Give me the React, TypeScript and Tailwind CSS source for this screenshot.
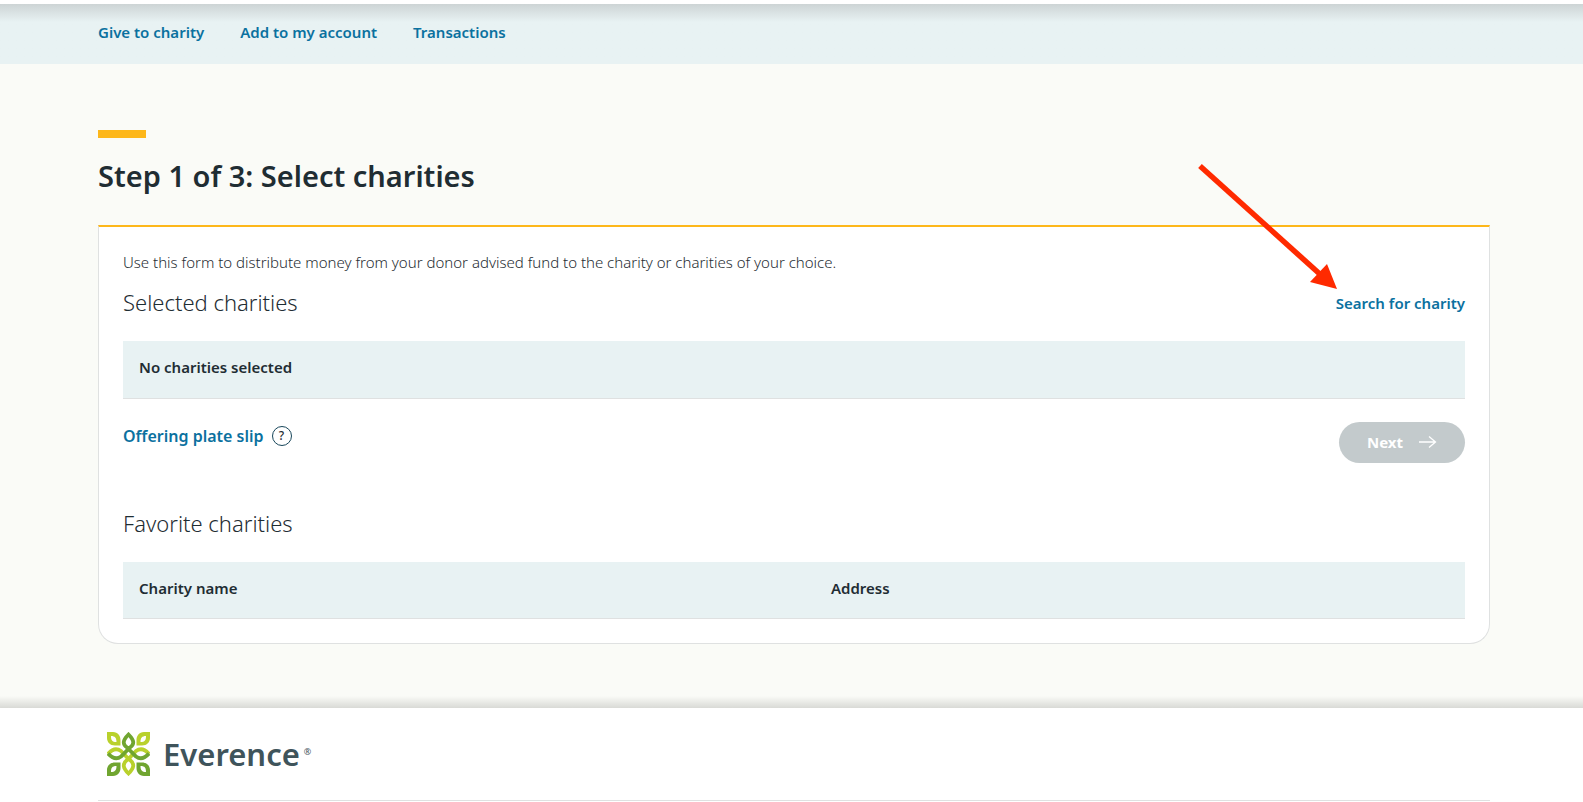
import React from 'react';
import clsx from 'clsx';

const navLinks = ['Give to charity', 'Add to my account', 'Transactions'];

// Corner leaf of the logo, drawn for the top left and mirrored for the others
const leaf =
  'M0 0H6C11 0 13.500 4 13.500 8V13.500H8C3 13.500 0 10 0 6ZM4 4C4 8 5 10 9.500 10C9.500 6 8 4 4 4Z';

function LogoMark() {
  return (
    <svg viewBox="0 0 43 44" className="h-11 w-[43px]" aria-hidden="true">
      <g fillRule="evenodd">
        <path d={leaf} fill="#b9d12c" />
        <path d={leaf} fill="#b9d12c" transform="matrix(-1 0 0 1 43 0)" />
        <path d={leaf} fill="#70a530" transform="matrix(1 0 0 -1 0 44)" />
        <path d={leaf} fill="#70a530" transform="matrix(-1 0 0 -1 43 44)" />
      </g>
      <g fill="none" strokeWidth="3.800">
        <path
          d="M1 22C6 16 10 16 14 19C18 23 20 26 23 28C28 32 27 36 21.500 41.500C16 36 15 32 20 28C23 26 25 23 29 19C33 16 37 16 42 22"
          stroke="#b9d12c"
        />
        <path
          d="M1 21.500C6 27 10 27.500 14 24.500C18 21 20 18 23 15.500C28 12 27 8 21.500 2.500C16 8 15 12 20 15.500C23 18 25 21 29 24.500C33 27.500 37 27 42 21.500"
          stroke="#70a530"
        />
      </g>
    </svg>
  );
}

function PointerArrow() {
  return (
    <svg
      viewBox="0 0 140 128"
      className="pointer-events-none absolute right-[127px] bottom-full h-32 w-[140px]"
      aria-hidden="true"
    >
      <path d="M2 4L124 114" stroke="#ff2a00" strokeWidth="5.500" />
      <path d="M139 127L129 102L112 120Z" fill="#ff2a00" />
    </svg>
  );
}

function CharityTable({ label, columns }: { label: string; columns: string[] }) {
  return (
    <table aria-label={label} className="w-full table-fixed text-left">
      <thead>
        <tr className="border-b border-[#dfe1e1] bg-[#e8f2f3]">
          {columns.map((column, i) => (
            <th
              key={column}
              scope="col"
              className={clsx('h-[57px] px-4 pb-1 text-[15px] font-semibold', columns.length > 1 && i === 0 && 'w-[692px]')}
            >
              {column}
            </th>
          ))}
        </tr>
      </thead>
    </table>
  );
}

export default function App() {
  return (
    <div className="flex min-h-screen flex-col bg-[#fafbf7] font-['Noto_Sans','Open_Sans',sans-serif] text-[#1f2d33]">
      <nav className="border-t-4 border-white bg-[#e8f2f3]">
        <div className="bg-linear-to-b from-[#cdd4d5] to-[#e8f2f3] to-[18px] pr-[93px] pl-[98px]">
          <ul className="flex h-[60px] gap-9 pt-4 text-[15px] leading-6 font-semibold text-[#0b719f]">
            {navLinks.map((link) => (
              <li key={link}>
                <a href="#">{link}</a>
              </li>
            ))}
          </ul>
        </div>
      </nav>

      <main className="pt-[66px] pr-[93px] pb-[52px] pl-[98px]">
        <div className="h-2 w-12 bg-[#fdb71a]" />
        <h1 className="mt-5 text-[29px] leading-9 font-semibold">Step 1 of 3: Select charities</h1>

        <section className="mt-[31px] rounded-b-[20px] border border-t-2 border-[#dfe1e1] border-t-[#fdb71a] bg-white px-6 pb-6">
          <p className="pt-[23px] text-[15px] leading-6 font-light">
            Use this form to distribute money from your donor advised fund to the charity or charities of your choice.
          </p>

          <div className="mt-3 flex items-center justify-between">
            <h2 className="text-[22px] leading-8 font-light">Selected charities</h2>
            <div className="relative pt-px">
              <a href="#" className="block text-[15px] leading-6 font-semibold text-[#0b719f]">
                Search for charity
              </a>
              <PointerArrow />
            </div>
          </div>

          <div className="mt-[23px]">
            <CharityTable label="Selected charities" columns={['No charities selected']} />
          </div>

          <div className="mt-[23px] flex items-start justify-between">
            <div className="flex items-center gap-2 pt-[2px]">
              <a href="#" className="text-base leading-6 font-semibold text-[#0b719f]">
                Offering plate slip
              </a>
              <button
                type="button"
                aria-label="About offering plate slips"
                className="flex size-5 items-center justify-center rounded-full border border-[#17465a] text-xs font-medium"
              >
                ?
              </button>
            </div>
            <button
              type="button"
              disabled
              className="flex h-[41px] items-center gap-4 rounded-full bg-[#c3cacc] px-7 text-[15px] font-bold text-white"
            >
              Next
              <svg viewBox="0 0 18 12" className="h-3 w-[18px]" fill="none" stroke="currentColor" aria-hidden="true">
                <path d="M0 6H16.500M10 0.500L16.500 6L10 11.500" strokeWidth="1.300" />
              </svg>
            </button>
          </div>

          <h2 className="mt-11 text-[22px] leading-8 font-light">Favorite charities</h2>
          <div className="mt-[23px]">
            <CharityTable label="Favorite charities" columns={['Charity name', 'Address']} />
          </div>
        </section>
      </main>

      <footer className="flex grow flex-col">
        <div className="h-3 bg-linear-to-b from-[#fafbf7] to-[#d9dad6]" />
        <div className="grow bg-white pr-[93px] pl-[98px]">
          <div className="flex h-[93px] items-center border-b border-[#dfe1e1] pl-[9px]">
            <a href="#" className="flex items-center gap-[13px]">
              <LogoMark />
              <span className="flex items-center gap-1 text-[#3f545b]">
                <span className="text-[31px] leading-9 font-semibold">Everence</span>
                <span className="pb-1 text-[9px] leading-4">®</span>
              </span>
            </a>
          </div>
        </div>
      </footer>
    </div>
  );
}
